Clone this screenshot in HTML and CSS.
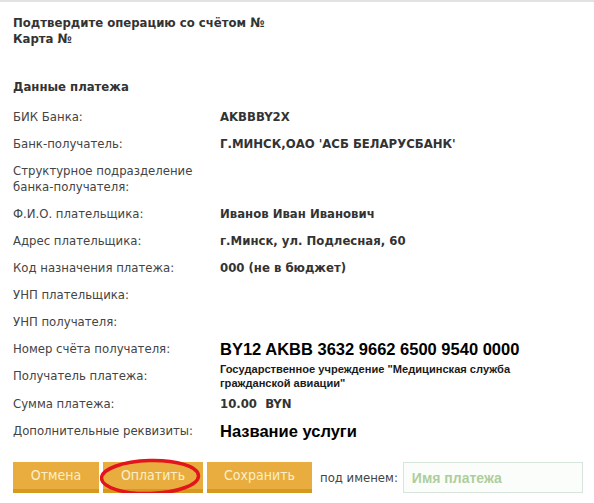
FILE: index.html
```html
<!DOCTYPE html>
<html lang="ru">
<head>
<meta charset="utf-8">
<title>Подтверждение операции</title>
<link rel="stylesheet" href="styles.css">
</head>
<body>
<div class="page">
  <div class="title">
    <div>Подтвердите операцию со счётом №</div>
    <div>Карта №</div>
  </div>
  <div class="heading">Данные платежа</div>
  <div class="details">
    <div class="row"><div class="label">БИК Банка:</div><div class="value">AKBBBY2X</div></div>
    <div class="row"><div class="label">Банк-получатель:</div><div class="value">Г.МИНСК,ОАО 'АСБ БЕЛАРУСБАНК'</div></div>
    <div class="row"><div class="label">Структурное подразделение<br>банка-получателя:</div><div class="value"></div></div>
    <div class="row"><div class="label">Ф.И.О. плательщика:</div><div class="value">Иванов Иван Иванович</div></div>
    <div class="row"><div class="label">Адрес плательщика:</div><div class="value">г.Минск, ул. Подлесная, 60</div></div>
    <div class="row"><div class="label">Код назначения платежа:</div><div class="value">000 (не в бюджет)</div></div>
    <div class="row"><div class="label">УНП плательщика:</div><div class="value"></div></div>
    <div class="row"><div class="label">УНП получателя:</div><div class="value"></div></div>
    <div class="row"><div class="label">Номер счёта получателя:</div><div class="value value-account">BY12 AKBB 3632 9662 6500 9540 0000</div></div>
    <div class="row row-tight"><div class="label">Получатель платежа:</div><div class="value value-recipient">Государственное учреждение "Медицинская служба<br>гражданской авиации"</div></div>
    <div class="row"><div class="label">Сумма платежа:</div><div class="value">10.00&nbsp;&nbsp;BYN</div></div>
    <div class="row"><div class="label">Дополнительные реквизиты:</div><div class="value value-service">Название услуги</div></div>
  </div>
  <div class="actions">
    <button class="btn btn-cancel" type="button">Отмена</button>
    <div class="btn-wrap">
      <button class="btn btn-pay" type="button">Оплатить</button>
      <svg class="circle" width="104" height="40" viewBox="0 0 104 40" aria-hidden="true">
        <ellipse cx="50" cy="19" rx="48.5" ry="16.5" fill="none" stroke="#e2141c" stroke-width="3.5" transform="rotate(-1.5 50 19)"/>
      </svg>
    </div>
    <button class="btn btn-save" type="button">Сохранить</button>
    <span class="under-name">под именем:</span>
    <input class="name-input" type="text" placeholder="Имя платежа">
  </div>
</div>
</body>
</html>
```

FILE: styles.css
```css
html, body {
  margin: 0;
  padding: 0;
  background: #ffffff;
}

body {
  font-family: "DejaVu Sans Condensed", "DejaVu Sans", Verdana, sans-serif;
  font-stretch: semi-condensed;
  font-size: 13px;
  line-height: 16px;
  color: #444444;
}

.page {
  border-top: 2px solid #e2e2e2;
  padding: 13px 0 0 13px;
}

.title {
  font-weight: bold;
  color: #333333;
}

.heading {
  margin-top: 32px;
  font-weight: bold;
  color: #333333;
}

.details {
  margin-top: 8px;
}

.row {
  display: flex;
  align-items: center;
  padding: 6px 0 5px 0;
}

.row-tight {
  padding: 0;
}

.label {
  width: 207px;
  flex: none;
  color: #444444;
}

.value {
  font-weight: bold;
  color: #333333;
}

.value-account {
  font-family: "Liberation Sans", Arial, sans-serif;
  font-stretch: normal;
  font-size: 16.5px;
  color: #000000;
}

.value-recipient {
  font-family: "Liberation Sans", Arial, sans-serif;
  font-stretch: normal;
  font-size: 11.1px;
  line-height: 14px;
  color: #1a1a1a;
}

.value-service {
  font-family: "Liberation Sans", Arial, sans-serif;
  font-stretch: normal;
  font-size: 16.5px;
  color: #000000;
}

.actions {
  margin-top: 18px;
  display: flex;
  align-items: center;
}

.btn {
  flex: none;
  height: 31px;
  padding: 0;
  margin: 0 4px 0 0;
  border: none;
  border-bottom: 4px solid #d7981f;
  background: #e8ad3e;
  color: #fcefc9;
  font-family: "DejaVu Sans Condensed", "DejaVu Sans", Verdana, sans-serif;
  font-stretch: semi-condensed;
  font-size: 14px;
  line-height: 27px;
  text-align: center;
  cursor: pointer;
}

.btn-cancel {
  width: 86px;
}

.btn-pay {
  width: 100px;
}

.btn-save {
  width: 105px;
}

.btn-wrap {
  flex: none;
  position: relative;
  display: flex;
}

.circle {
  position: absolute;
  left: -3px;
  top: -4px;
  pointer-events: none;
}

.under-name {
  flex: none;
  margin-left: 4px;
  white-space: nowrap;
  color: #444444;
}

.name-input {
  flex: none;
  margin-left: 5px;
  width: 170px;
  height: 29px;
  box-sizing: content-box;
  padding: 0 0 0 8px;
  border: 1px solid #d7e5dc;
  background: #fbfdfb;
  font-family: "Liberation Sans", Arial, sans-serif;
  font-size: 14px;
  font-weight: bold;
  color: #333333;
  outline: none;
}

.name-input::placeholder {
  color: #aecd9c;
  opacity: 1;
}
```
